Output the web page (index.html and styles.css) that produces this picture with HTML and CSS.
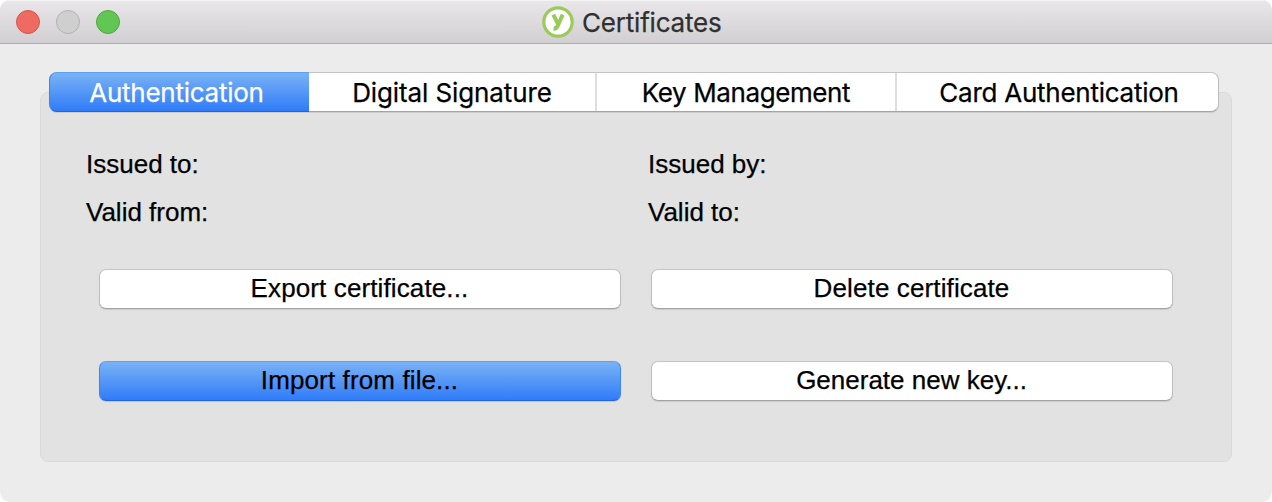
FILE: index.html
```html
<!DOCTYPE html>
<html lang="en">
<head>
<meta charset="utf-8">
<title>Certificates</title>
<link rel="stylesheet" href="styles.css">
</head>
<body>
<main class="window">
  <header class="titlebar">
    <div class="controls">
      <span class="light close"></span>
      <span class="light minimize"></span>
      <span class="light zoom"></span>
    </div>
    <h1 class="title">
      <svg class="logo" viewBox="0 0 32 32" aria-hidden="true">
        <circle cx="16" cy="16" r="14.2" fill="#fff" stroke="#9aca5a" stroke-width="3.2"/>
        <path d="M11.3 8.6 16 18.2M20.7 8.6 16 19.2Q14.6 22.9 11.6 22.6" fill="none" stroke="#9aca5a" stroke-width="4"/>
      </svg>
      <span class="title-text">Certificates</span>
    </h1>
  </header>
  <section class="content">
    <div class="panel">
      <nav class="tabs">
        <a class="tab tab-auth selected">Authentication</a>
        <a class="tab tab-sign">Digital Signature</a>
        <a class="tab tab-key">Key Management</a>
        <a class="tab tab-card">Card Authentication</a>
      </nav>
      <div class="details">
        <span>Issued to:</span><span>Issued by:</span>
        <span>Valid from:</span><span>Valid to:</span>
      </div>
      <div class="actions">
        <button class="button wide-text">Export certificate...</button>
        <button class="button wide-text">Delete certificate</button>
        <button class="button wide-text primary">Import from file...</button>
        <button class="button">Generate new key...</button>
      </div>
    </div>
  </section>
</main>
</body>
</html>
```
FILE: styles.css
```css
* { box-sizing: border-box; }
body { margin: 0; background: #fff; color: #000; }
.window {
  width: 1272px;
  height: 502px;
  display: flex;
  flex-direction: column;
  overflow: hidden;
  border-radius: 10px;
  background: #ececec;
  -webkit-text-stroke: .25px;
}
.titlebar {
  height: 44px;
  flex: none;
  display: grid;
  grid-template-columns: 542px 1fr;
  background: linear-gradient(#e9e7e9, #d1cfd1);
  border-bottom: 1px solid #adabad;
  box-shadow: inset 0 1px #f5f4f5;
}
.controls { display: flex; gap: 16px; padding: 10px 0 0 16px; }
.light { width: 24px; height: 24px; border-radius: 50%; border: 1px solid; }
.close { background: #ed6b60; border-color: #d9544b; }
.minimize { background: #d0cfd0; border-color: #b3b1b3; }
.zoom { background: #62c655; border-color: #51a83c; }
.title {
  display: flex;
  gap: 8px;
  margin: 0;
  padding-top: 6px;
  font: 400 26px/34px Inter, sans-serif;
  letter-spacing: -.2px;
  color: #303030;
}
.logo { width: 32px; height: 32px; }
.content { flex: 1; padding: 48px 40px 40px; }
.panel {
  height: 370px;
  border: 1px solid #dadada;
  border-radius: 8px;
  background: #e2e2e2;
  padding: 0 12px 0 8px;
}
.tabs {
  width: 1170px;
  height: 40px;
  margin-top: -21px;
  display: grid;
  grid-template-columns: 259px 288px 300px 321px;
  border-radius: 8px;
  background: #fff;
  border: 1px solid;
  border-color: #c4c4c4 #bdbdbd #a4a4a4;
  box-shadow: 0 1px 1px rgba(0, 0, 0, .1);
}
.tab {
  height: 38px;
  text-align: center;
  font: 400 26px/40px Inter, sans-serif;
  letter-spacing: -.25px;
  border-right: 2px solid #dedede;
}
.tab-sign { letter-spacing: -.1px; }
.tab-key { letter-spacing: -.4px; }
.tab-card { border-right: 0; padding-left: 3px; }
.selected {
  height: 40px;
  margin: -1px 0 0 -1px;
  padding-right: 6px;
  border: 1px solid;
  border-right: 0;
  border-color: #5d9ff0 #3f84f4 #1f62ed;
  border-radius: 8px 0 0 8px;
  background: linear-gradient(#7ab2f5, #307cf8);
  color: #fff;
}
.details {
  display: grid;
  grid-template-columns: 562px 1fr;
  grid-auto-rows: 48px;
  padding: 28px 0 0 37px;
  font: 26px/48px "Liberation Sans", sans-serif;
}
.actions {
  display: grid;
  grid-template-columns: 522px 522px;
  grid-auto-rows: 40px;
  gap: 52px 30px;
  padding: 33px 0 0 50px;
}
.button {
  margin: 0;
  padding: 0 1px 2px 0;
  border: 1px solid;
  border-color: #c4c4c4 #bdbdbd #a4a4a4;
  border-radius: 7px;
  background: #fff;
  box-shadow: 0 1px 1px rgba(0, 0, 0, .1);
  font: 26px/36px "Liberation Sans", sans-serif;
  color: #000;
  -webkit-text-stroke: .25px;
}
.wide-text { letter-spacing: .12px; }
.primary {
  border-color: #5d9ff0 #3f84f4 #1f62ed;
  background: linear-gradient(#7ab2f5, #307cf8);
}
```
